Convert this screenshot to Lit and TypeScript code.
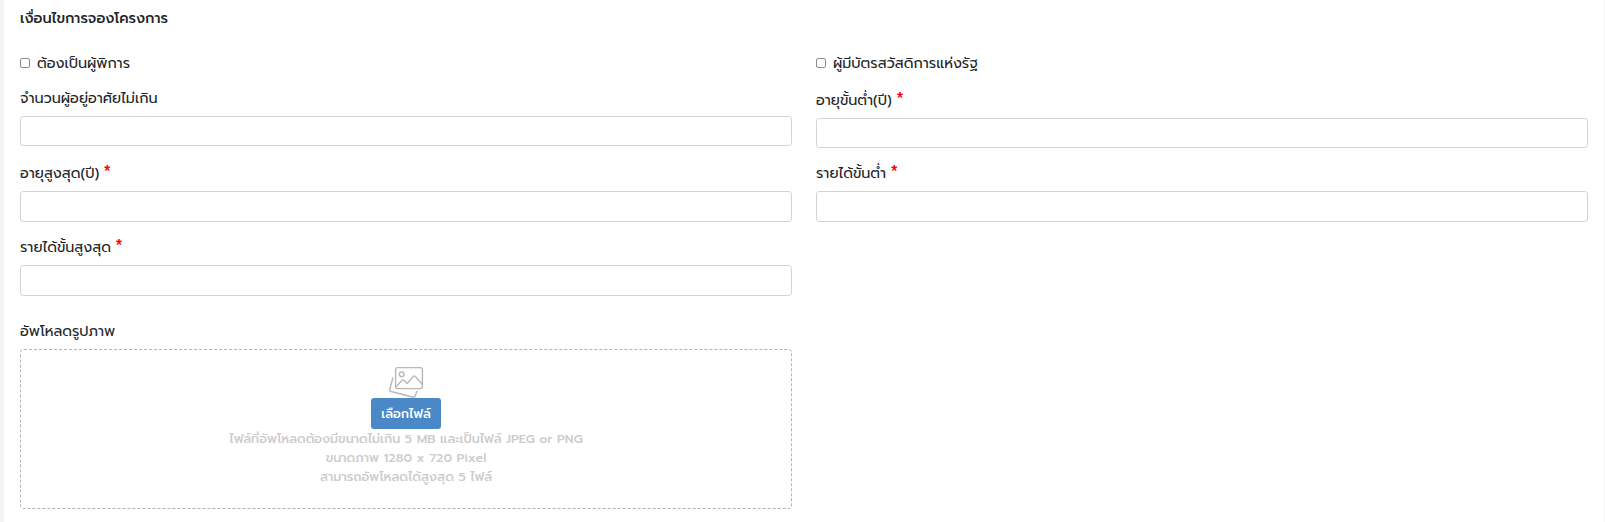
import { LitElement, html, css, nothing } from "lit";
import { customElement, property } from "lit/decorators.js";

@customElement("text-field")
class TextField extends LitElement {
  @property() label = "";
  @property({ type: Boolean }) required = false;
  static styles = css`
    :host { display: block; }
    .label { display: block; height: 21.6px; line-height: 21.6px; padding-top: 1.6px; margin-bottom: 6.4px; white-space: nowrap; }
    .star { color: #f00; font-size: 17px; font-weight: 500; line-height: 1; margin-left: -1px; }
    .input {
      display: block; box-sizing: border-box; width: 100%; height: 30.4px;
      border: 1px solid #ced4da; border-radius: 3.2px; background: #fff; padding: 4px 8px; font: inherit;
    }
  `;
  render() {
    return html`<label class="label" for="field">${this.label}${this.required ? html` <span class="star">*</span>` : nothing}</label>
      <input id="field" class="input" type="text" />`;
  }
}

@customElement("check-option")
class CheckOption extends LitElement {
  @property() label = "";
  static styles = css`
    :host { display: block; }
    .option { display: flex; align-items: center; height: 22px; line-height: 22px; white-space: nowrap; }
    .box {
      appearance: none; box-sizing: border-box; width: 10px; height: 10px; margin: 0 7px 0 0;
      border: 1px solid #8c8c8c; border-radius: 2px; background: #fff;
    }
  `;
  render() {
    return html`<label class="option"><input class="box" type="checkbox" />${this.label}</label>`;
  }
}

@customElement("image-upload")
class ImageUpload extends LitElement {
  static styles = css`
    :host { display: block; }
    .label { height: 22px; line-height: 22px; margin-bottom: 7px; }
    .drop {
      box-sizing: border-box; height: 160px; padding-top: 16px;
      border: 1px dashed #b4b4b4; border-radius: 4px;
      display: flex; flex-direction: column; align-items: center;
      color: #ccc; font-size: 12.67px; font-weight: 500; line-height: 19px; text-align: center;
    }
    .icon { display: block; width: 36px; height: 32px; flex: none; }
    .button {
      box-sizing: border-box; width: 70px; height: 31px; padding: 0; border: 0; border-radius: 3px;
      background: #4b88c7; color: #fff; font: inherit; line-height: 31px; flex: none;
    }
  `;
  render() {
    return html`<div class="label">อัพโหลดรูปภาพ</div>
      <div class="drop">
        <svg class="icon" viewBox="0 0 36 32" fill="none" stroke="#b8b8b8" stroke-width="1.4" stroke-linejoin="round" stroke-linecap="round">
          <rect x="7.6" y="1.6" width="26.8" height="21" rx="2" />
          <circle cx="13.7" cy="8.3" r="2.4" />
          <path d="M8 20.5l6.3-6.2q.8-.7 1.6 0l3.3 3.3 6.2-7.3q.8-.9 1.7 0l7.2 8" />
          <path d="M4.8 12.2L1.8 23.2q-.4 1.8 1.3 2.3L25.5 31.2q1.2.3 1.6-.9l1.8-5" />
        </svg>
        <button class="button" type="button">เลือกไฟล์</button>
        <div>ไฟล์ที่อัพโหลดต้องมีขนาดไม่เกิน 5 MB และเป็นไฟล์ JPEG or PNG</div>
        <div>ขนาดภาพ 1280 x 720 Pixel</div>
        <div>สามารถอัพโหลดได้สูงสุด 5 ไฟล์</div>
      </div>`;
  }
}

@customElement("app-root")
class AppRoot extends LitElement {
  static styles = css`
    :host {
      display: block; box-sizing: border-box; height: 522px; overflow: hidden;
      padding: 0 1px 0 4px; background: #f4f4f4;
      font-family: Prompt, "Noto Sans Thai", "Noto Sans", sans-serif; font-size: 14.4px; color: #212529;
    }
    .panel { box-sizing: border-box; height: 100%; padding: 7px 16px 0; background: #fff; }
    .title { margin: 0 0 23px; font-size: 14.4px; font-weight: 500; line-height: 22px; }
    .columns { display: grid; grid-template-columns: 1fr 1fr; column-gap: 24px; align-items: start; }
    .column { display: flex; flex-direction: column; }
    .occupants { margin-top: 12.2px; }
    .min-age { margin-top: 14.2px; }
    .min-income { margin-top: 13.5px; }
    .max-age { margin-top: 15.5px; }
    .max-income { margin-top: 14px; }
    .upload { margin-top: 24.3px; }
  `;
  render() {
    return html`<section class="panel">
      <h2 class="title">เงื่อนไขการจองโครงการ</h2>
      <div class="columns">
        <div class="column">
          <check-option label="ต้องเป็นผู้พิการ"></check-option>
          <text-field class="occupants" label="จำนวนผู้อยู่อาศัยไม่เกิน"></text-field>
          <text-field class="max-age" label="อายุสูงสุด(ปี)" required></text-field>
          <text-field class="max-income" label="รายได้ขั้นสูงสุด" required></text-field>
          <image-upload class="upload"></image-upload>
        </div>
        <div class="column">
          <check-option label="ผู้มีบัตรสวัสดิการแห่งรัฐ"></check-option>
          <text-field class="min-age" label="อายุขั้นต่ำ(ปี)" required></text-field>
          <text-field class="min-income" label="รายได้ขั้นต่ำ" required></text-field>
        </div>
      </div>
    </section>`;
  }
}
